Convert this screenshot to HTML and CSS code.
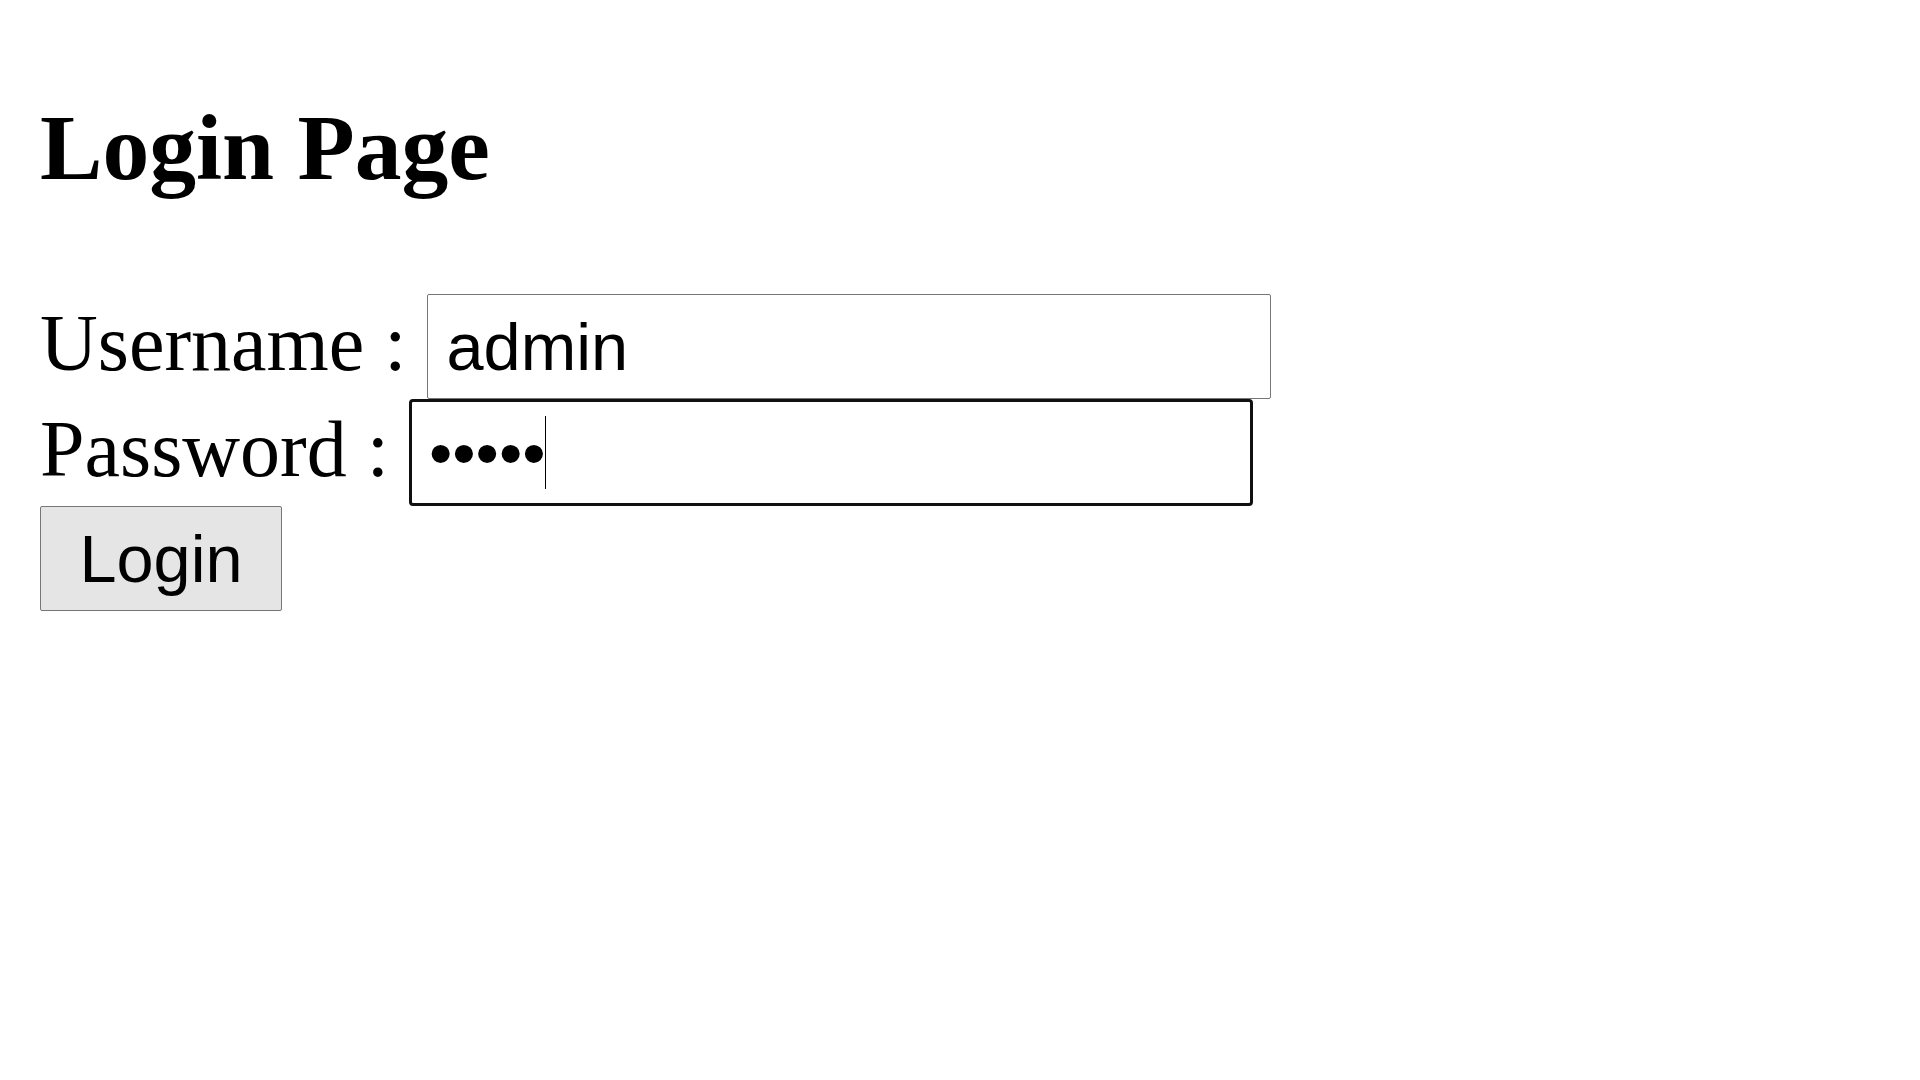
FILE: index.html
```html
<!DOCTYPE html>
<html lang="en">
<head>
<meta charset="utf-8">
<title>Login Page</title>
<link rel="stylesheet" href="styles.css">
</head>
<body>
<h1 class="title">Login Page</h1>
<form class="login-form">
  <div class="row"><label class="label" for="user">Username :</label> <input id="user" class="field" type="text" value="admin"></div>
  <div class="row"><label class="label" for="pass">Password :</label> <span class="field-wrap"><input id="pass" class="field field-focused" type="password" value="admin"><span class="caret"></span></span></div>
  <div class="row"><button type="button" class="btn">Login</button></div>
</form>
</body>
</html>
```

FILE: styles.css
```css
html, body {
  background: #ffffff;
}

body {
  margin: 0;
  padding: 40px;
  font-family: "Liberation Serif", "Times New Roman", serif;
  font-size: 80px;
  color: #000000;
}

.title {
  font-size: 93.6px;
  font-weight: bold;
  margin: 53.6px 0 93.6px;
  line-height: normal;
}

.login-form {
  margin: 0;
}

.row {
  line-height: normal;
}

.label {
  font: inherit;
}

.field {
  box-sizing: border-box;
  width: 844px;
  height: 105px;
  margin: 0;
  padding: 0 19px;
  border: 1px solid #767676;
  border-radius: 2px;
  background: #ffffff;
  color: #000000;
  font-family: "Liberation Sans", Arial, sans-serif;
  font-size: 66.67px;
  outline: none;
  vertical-align: baseline;
}

.field-focused {
  height: 107px;
  border: 3px solid #101010;
  border-radius: 4px;
  padding: 0 17px;
}

.field-wrap {
  position: relative;
  display: inline-block;
}

.caret {
  position: absolute;
  left: 136px;
  top: 17px;
  width: 1px;
  height: 73px;
  background: #000000;
}

.btn {
  box-sizing: border-box;
  width: 242px;
  height: 105px;
  margin: 0;
  padding: 0;
  border: 1px solid #767676;
  border-radius: 2px;
  background: #e5e5e5;
  color: #000000;
  font-family: "Liberation Sans", Arial, sans-serif;
  font-size: 66.67px;
  text-align: center;
  vertical-align: baseline;
}
```
